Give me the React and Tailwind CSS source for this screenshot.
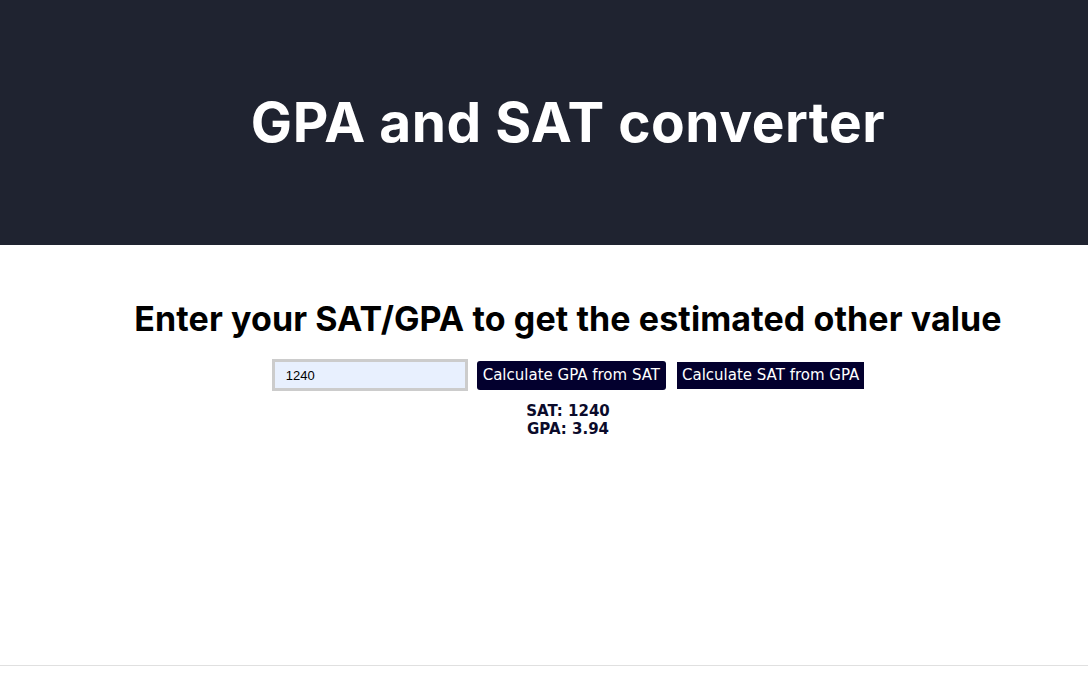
import { useState } from 'react'

/* ─── Simple SAT <-> GPA estimate ─── */
const satToGpa = (sat) => {
  const g = 4 * (sat / 1260)
  return Math.min(4, g).toFixed(2)
}

export default function App() {
  const [value, setValue] = useState('1240')
  const [result, setResult] = useState({ sat: '1240', gpa: '3.94' })

  const fromSat = () => setResult({ sat: value, gpa: satToGpa(Number(value)) })
  const fromGpa = () => setResult({ gpa: value, sat: String(Math.round((Number(value) / 4) * 1260)) })

  return (
    <div className="min-h-[679px] bg-white flex flex-col">
      {/* Header */}
      <header className="h-[245px] bg-[#1f2330] flex items-center justify-center pl-[48px]">
        <h1 className="text-white font-bold text-[55px] font-['Inter',sans-serif] tracking-[0.5px]">
          GPA and SAT converter
        </h1>
      </header>

      {/* Converter */}
      <main className="flex-1 flex flex-col items-center pl-[48px] pt-[48px]">
        <h2 className="text-black font-bold text-[34px] leading-[51px] font-['Inter',sans-serif] tracking-[0.1px]">
          Enter your SAT/GPA to get the estimated other value
        </h2>

        <div className="flex items-center mt-[15px]">
          <input
            value={value}
            onChange={e => setValue(e.target.value)}
            className="w-[196px] h-[32px] border-[3px] border-[#cccccc] bg-[#e8f0fe] pl-[11px] text-[13px] text-black font-['Liberation_Sans',sans-serif] outline-none"
          />
          <button
            onClick={fromSat}
            className="ml-[9px] h-[29px] px-[6px] rounded-[3px] bg-[#03002e] text-white text-[15px] font-['DejaVu_Sans',sans-serif]"
          >
            Calculate GPA from SAT
          </button>
          <button
            onClick={fromGpa}
            className="ml-[11px] h-[27px] px-[5px] bg-[#03002e] text-white text-[15px] font-['DejaVu_Sans',sans-serif]"
          >
            Calculate SAT from GPA
          </button>
        </div>

        <div className="mt-[11px] text-center text-[#0b0b2b] font-bold text-[15px] leading-[18px] font-['DejaVu_Sans',sans-serif]">
          <div>SAT: {result.sat}</div>
          <div>GPA: {result.gpa}</div>
        </div>
      </main>

      <div className="h-[14px] border-t border-[#e0e0e0]" />
    </div>
  )
}
